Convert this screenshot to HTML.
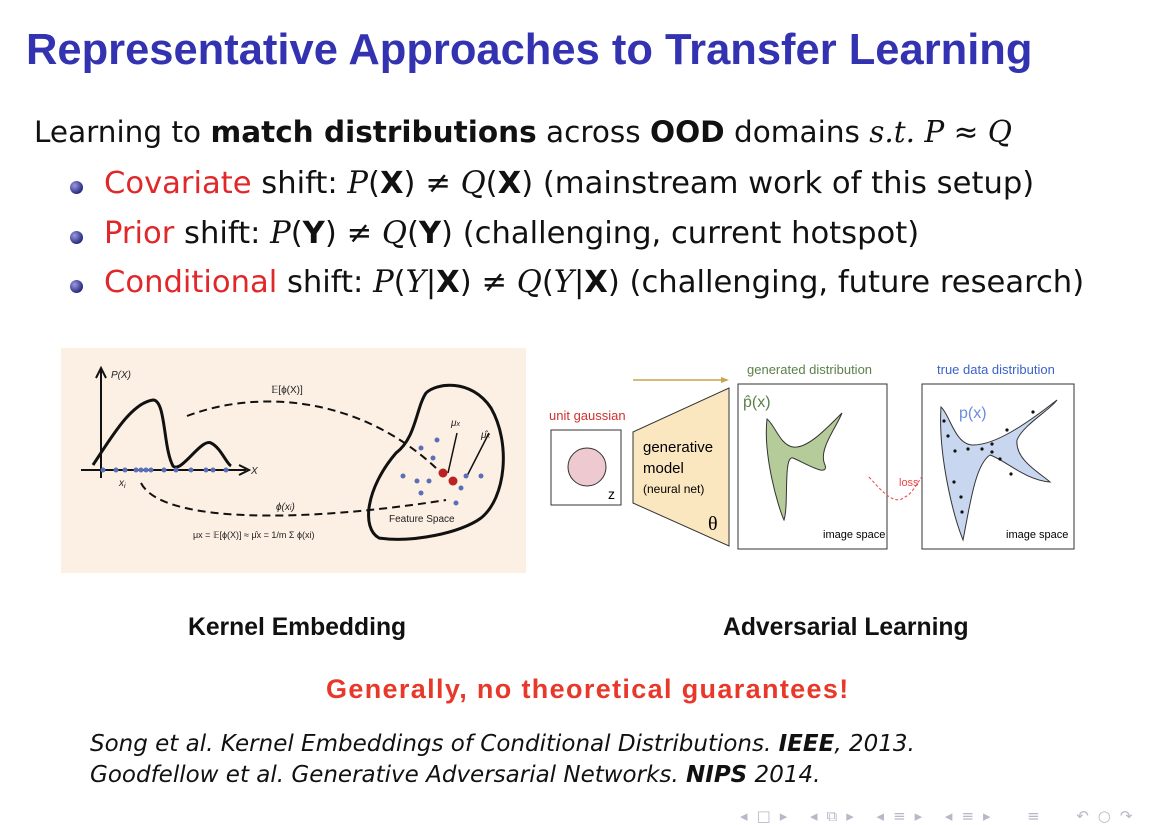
<!DOCTYPE html>
<html><head><meta charset="utf-8"><style>
body{margin:0;width:1149px;height:825px;background:#fff;position:relative;overflow:hidden;font-family:"DejaVu Sans","Liberation Sans",sans-serif;color:#111}
.a{position:absolute;white-space:nowrap}
.title{left:26px;top:26px;font:bold 43.5px "Liberation Sans",sans-serif;color:#3333b2}
.l{font-size:29.5px}
.b{font-size:30.6px}
.dot{position:absolute;width:13px;height:13px;border-radius:50%;background:radial-gradient(circle at 35% 35%,#9a9ae0,#2a2a80 70%)}
.r{color:#e0282a}
i{font-family:"DejaVu Serif","Liberation Serif",serif}
.cap{font:bold 24.7px "Liberation Sans",sans-serif}
.ref{font-style:italic;font-size:23px;color:#111}
</style></head><body>
<div class="a title">Representative Approaches to Transfer Learning</div>
<div class="a l" style="left:34px;top:115px">Learning to <b>match distributions</b> across <b>OOD</b> domains <i>s.t.</i> <i>P</i> ≈ <i>Q</i></div>
<div class="dot" style="left:70px;top:181px"></div>
<div class="a b" style="left:104px;top:166px"><span class="r">Covariate</span> shift: <i>P</i>(<b>X</b>) ≠ <i>Q</i>(<b>X</b>) (mainstream work of this setup)</div>
<div class="dot" style="left:70px;top:231px"></div>
<div class="a b" style="left:104px;top:216px"><span class="r">Prior</span> shift: <i>P</i>(<b>Y</b>) ≠ <i>Q</i>(<b>Y</b>) (challenging, current hotspot)</div>
<div class="dot" style="left:70px;top:280px"></div>
<div class="a b" style="left:104px;top:265px"><span class="r">Conditional</span> shift: <i>P</i>(<i>Y</i>|<b>X</b>) ≠ <i>Q</i>(<i>Y</i>|<b>X</b>) (challenging, future research)</div>

<svg class="a" style="left:61px;top:348px" width="465" height="225" viewBox="0 0 465 225">
<rect width="465" height="225" fill="#fcefe3"/>
<g stroke="#111" fill="none" stroke-width="2">
<path d="M40 130V22"/><path d="M35 30L40 20L45 30"/><path d="M20 122H185"/><path d="M178 117L188 122L178 127"/>
<path d="M32 117C50 90 70 55 92 52C105 52 102 100 112 118C120 126 140 90 150 95C160 100 165 115 170 118" stroke-width="3"/>
<path d="M318 190C300 180 305 140 335 105C355 90 355 60 365 45C375 35 410 30 430 60C450 95 445 150 420 170C400 185 350 195 318 190Z" stroke-width="3"/>
<path d="M126 68C200 40 300 50 375 120" stroke-dasharray="8 5" stroke-width="2"/>
<path d="M80 135C100 175 240 175 385 152" stroke-dasharray="8 5" stroke-width="2"/>
<path d="M396 85L387 125M428 85L405 130" stroke-width="1.5"/>
</g>
<g fill="#5a6fb8"><circle cx="42" cy="122" r="2.5"/><circle cx="55" cy="122" r="2.5"/><circle cx="64" cy="122" r="2.5"/><circle cx="75" cy="122" r="2.5"/><circle cx="80" cy="122" r="2.5"/><circle cx="85" cy="122" r="2.5"/><circle cx="90" cy="122" r="2.5"/><circle cx="103" cy="122" r="2.5"/><circle cx="115" cy="122" r="2.5"/><circle cx="130" cy="122" r="2.5"/><circle cx="145" cy="122" r="2.5"/><circle cx="152" cy="122" r="2.5"/><circle cx="165" cy="122" r="2.5"/>
<circle cx="360" cy="100" r="2.5"/><circle cx="376" cy="92" r="2.5"/><circle cx="372" cy="110" r="2.5"/><circle cx="342" cy="128" r="2.5"/><circle cx="356" cy="133" r="2.5"/><circle cx="368" cy="133" r="2.5"/><circle cx="405" cy="128" r="2.5"/><circle cx="420" cy="128" r="2.5"/><circle cx="400" cy="140" r="2.5"/><circle cx="360" cy="145" r="2.5"/><circle cx="395" cy="155" r="2.5"/></g>
<circle cx="382" cy="125" r="4.5" fill="#b22"/><circle cx="392" cy="133" r="4.5" fill="#b22"/>
<g font-family="Liberation Sans,sans-serif" font-size="10" fill="#222"><text x="50" y="30" font-style="italic">P(X)</text><text x="190" y="126" font-style="italic">X</text><text x="58" y="138" font-style="italic">x<tspan font-size="7" dy="2">i</tspan></text><text x="210" y="45">𝔼[ϕ(X)]</text><text x="215" y="162" font-style="italic">ϕ(x<tspan font-size="7">i</tspan>)</text><text x="328" y="174">Feature Space</text><text x="390" y="78" font-style="italic">μ<tspan font-size="7">x</tspan></text><text x="420" y="90" font-style="italic">μ̂<tspan font-size="7">x</tspan></text><text x="132" y="190" font-size="9">μx = 𝔼[ϕ(X)] ≈ μ̂x = 1/m Σ ϕ(xi)</text></g>
</svg>

<svg class="a" style="left:545px;top:355px" width="540" height="200" viewBox="0 0 540 200">
<g font-family="Liberation Sans,sans-serif">
<path d="M88 25H182" stroke="#c9a450" stroke-width="1.5"/><path d="M176 22L184 25L176 28" fill="#c9a450"/>
<rect x="6" y="75" width="70" height="75" fill="#fff" stroke="#333"/>
<circle cx="42" cy="112" r="19" fill="#eec9cf" stroke="#333"/>
<text x="63" y="144" font-size="14">z</text>
<text x="4" y="65" font-size="13" fill="#d23030">unit gaussian</text>
<path d="M88 77L184 33V191L88 148Z" fill="#fbe7bf" stroke="#333"/>
<text x="98" y="97" font-size="15">generative</text><text x="98" y="118" font-size="15">model</text><text x="98" y="138" font-size="12">(neural net)</text>
<text x="163" y="175" font-size="20" font-family="Liberation Serif,serif">θ</text>
<rect x="193" y="29" width="149" height="165" fill="#fff" stroke="#333"/>
<text x="202" y="19" font-size="13" fill="#5a8048">generated distribution</text>
<text x="198" y="52" font-size="16" fill="#5a8048">p̂(x)</text>
<path d="M222 64C230 70 235 90 248 92C262 94 280 75 297 58C290 75 273 95 280 110C284 123 260 108 248 103C238 100 244 150 239 165C233 152 218 100 222 64Z" fill="#b5cc9a" stroke="#333"/>
<text x="278" y="183" font-size="11">image space</text>
<rect x="377" y="29" width="152" height="165" fill="#fff" stroke="#333"/>
<text x="392" y="19" font-size="13" fill="#3a63c8">true data distribution</text>
<text x="414" y="63" font-size="16" fill="#6a8ce0">p(x)</text>
<path d="M396 52C405 60 410 90 428 90C450 90 480 70 512 45C505 55 478 70 472 85C470 105 495 118 505 127C480 125 460 105 445 100C430 110 425 150 418 185C408 160 393 100 396 52Z" fill="#c8d7ef" stroke="#333"/>
<g fill="#111"><circle cx="399" cy="66" r="1.6"/><circle cx="403" cy="81" r="1.6"/><circle cx="410" cy="96" r="1.6"/><circle cx="423" cy="94" r="1.6"/><circle cx="437" cy="94" r="1.6"/><circle cx="447" cy="89" r="1.6"/><circle cx="447" cy="97" r="1.6"/><circle cx="462" cy="75" r="1.6"/><circle cx="455" cy="104" r="1.6"/><circle cx="466" cy="119" r="1.6"/><circle cx="409" cy="127" r="1.6"/><circle cx="416" cy="142" r="1.6"/><circle cx="417" cy="157" r="1.6"/><circle cx="488" cy="57" r="1.6"/></g>
<text x="461" y="183" font-size="11">image space</text>
<path d="M324 122C340 140 350 150 360 142C368 138 372 128 378 120" fill="none" stroke="#e44" stroke-dasharray="3 2"/>
<text x="354" y="131" font-size="11" fill="#e44">loss</text>
</g></svg>

<div class="a cap" style="left:188px;top:614px">Kernel Embedding</div>
<div class="a cap" style="left:723px;top:614px">Adversarial Learning</div>
<div class="a" style="left:326px;top:674px;font:bold 27px 'Liberation Sans',sans-serif;color:#e8382a;letter-spacing:1.35px">Generally, no theoretical guarantees!</div>
<div class="a ref" style="left:90px;top:731px">Song et al. Kernel Embeddings of Conditional Distributions. <b>IEEE</b>, 2013.</div>
<div class="a ref" style="left:90px;top:762px">Goodfellow et al. Generative Adversarial Networks. <b>NIPS</b> 2014.</div>
<div class="a" style="left:740px;top:807px;font-size:15px;color:#b8b8c8;letter-spacing:9px">◂□▸ ◂⧉▸ ◂≡▸ ◂≡▸ &nbsp;≡ &nbsp;↶○↷</div>
</body></html>
